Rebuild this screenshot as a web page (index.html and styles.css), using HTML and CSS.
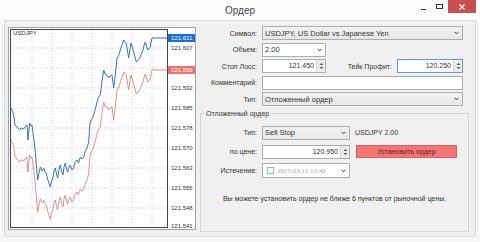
FILE: index.html
```html
<!DOCTYPE html>
<html lang="ru">
<head>
<meta charset="UTF-8">
<title>Ордер</title>
<link rel="stylesheet" href="styles.css">
</head>
<body>
<div class="window">
  <div class="titlebar">
    <span class="title">Ордер</span>
    <div class="controls">
      <span class="ctl min"></span>
      <span class="ctl max"></span>
      <span class="ctl close"><svg width="6" height="6" viewBox="0 0 6 6"><path d="M0.5 0.5L5.5 5.5M5.5 0.5L0.5 5.5" stroke="#fff" stroke-width="1.1"/></svg></span>
    </div>
  </div>

  <div class="body">
    <div class="chart-pane">
      <svg class="chart" width="188" height="203" viewBox="9 28 188 203">
        <defs>
          <polyline id="tick" fill="none" points="12,109 13.5,112 14.7,116 16,126 18,128 20.7,131 22,129 24.7,130 26,128 28,126 29,141 30.7,124 32,127 33,126 34.7,139 36,150 37.3,166 38.7,181 40,174 41.3,168 43,172 44.7,169 46,173 47.3,174 48.5,180 49.7,183 51.3,188 52.5,182 54,178 55,172 56.3,169 57.5,175 58.7,179 60,170 61.3,166 62.5,172 64,176 65,168 66.3,164 67.5,170 68.7,173 70,168 71.3,166 73,171 74.7,169 76,163 78,161 79.5,164 81.3,158 83,160 84.7,158 86,153 88,149 89.7,143 90.5,130 91.3,123 93,120 94.7,116 96,111 97.3,106 98.5,101 99.7,98 101.3,96 103,82 104.7,71 106,75 108,76 109.7,79 111,77 113,76 114.7,89 116.3,76 118,59 119.5,57 121.3,51 123,46 124.7,41 126,43 127.3,44 128.5,52 129.7,59 131,50 132,44 133.3,48 134.7,53 136,58 137.3,63 139,61 140.7,59 142.3,55 144,51 145.2,46 146.3,43 147.5,47 148.7,51 150,50 151.3,48 152,43 153,39 169,39"/>
        </defs>
        <rect x="9.5" y="28.5" width="187" height="202" fill="#fff" stroke="#a3a3a3"/>
        <path d="M33 31V228M53 31V228M73 31V228M93 31V228M113 31V228M133 31V228M153 31V228M12 49H168M12 69H168M12 89H168M12 109H168M12 129H168M12 149H168M12 169H168M12 189H168M12 209H168" stroke="#cfcfcf" stroke-dasharray="1 2"/>
        <use href="#tick" stroke="#dc9292" transform="translate(0 32)"/>
        <use href="#tick" stroke="#3574bb"/>
        <rect x="11.5" y="30.5" width="157" height="198" fill="none" stroke="#444"/>
        <text class="sym" x="14" y="36">USDJPY</text>
        <g class="scale">
          <text x="172" y="51">121.607</text>
          <text x="172" y="91">121.592</text>
          <text x="172" y="111">121.585</text>
          <text x="172" y="131">121.578</text>
          <text x="172" y="151">121.570</text>
          <text x="172" y="171">121.563</text>
          <text x="172" y="191">121.556</text>
          <text x="172" y="211">121.548</text>
          <text x="172" y="229">121.541</text>
        </g>
        <rect x="169" y="35" width="27" height="8" fill="#1c6fd6"/>
        <text class="tag" x="172" y="41">121.611</text>
        <rect x="169" y="67" width="27" height="8" fill="#ec7272"/>
        <text class="tag" x="172" y="73">121.599</text>
      </svg>
    </div>

    <div class="form-pane">
      <div class="form">
        <label>Символ:</label>
        <div class="sel">USDJPY, US Dollar vs Japanese Yen<svg class="chev" width="5" height="4" viewBox="0 0 5 4"><path d="M0.5 0.8L2.5 2.8L4.5 0.8" fill="none" stroke="#333" stroke-width="1"/></svg></div>

        <label>Объем:</label>
        <div class="row"><div class="sel white w64">2.00<svg class="chev" width="5" height="4" viewBox="0 0 5 4"><path d="M0.5 0.8L2.5 2.8L4.5 0.8" fill="none" stroke="#333" stroke-width="1"/></svg></div></div>

        <label>Стоп Лосс:</label>
        <div class="row">
          <div class="num w64"><span class="val">121.450</span><span class="spin"><svg width="5" height="8" viewBox="0 0 5 8"><path d="M2.5 1L4.5 3H0.5ZM2.5 7L4.5 5H0.5Z" fill="#555"/></svg></span></div>
          <label class="tp">Тейк Профит:</label>
          <div class="num focus w66"><span class="val">120.250</span><span class="spin"><svg width="5" height="8" viewBox="0 0 5 8"><path d="M2.5 1L4.5 3H0.5ZM2.5 7L4.5 5H0.5Z" fill="#555"/></svg></span></div>
        </div>

        <label>Комментарий:</label>
        <div class="edit"></div>

        <label>Тип:</label>
        <div class="sel">Отложенный ордер<svg class="chev" width="5" height="4" viewBox="0 0 5 4"><path d="M0.5 0.8L2.5 2.8L4.5 0.8" fill="none" stroke="#333" stroke-width="1"/></svg></div>
      </div>

      <fieldset class="group">
        <legend>Отложенный ордер</legend>
        <div class="form inner">
          <label>Тип:</label>
          <div class="row">
            <div class="sel w88">Sell Stop<svg class="chev" width="5" height="4" viewBox="0 0 5 4"><path d="M0.5 0.8L2.5 2.8L4.5 0.8" fill="none" stroke="#333" stroke-width="1"/></svg></div>
            <span class="info">USDJPY 2.00</span>
          </div>

          <label>по цене:</label>
          <div class="row">
            <div class="num w88"><span class="val">120.950</span><span class="spin"><svg width="5" height="8" viewBox="0 0 5 8"><path d="M2.5 1L4.5 3H0.5ZM2.5 7L4.5 5H0.5Z" fill="#555"/></svg></span></div>
            <button class="place">Установить ордер</button>
          </div>

          <label>Истечение:</label>
          <div class="row">
            <div class="sel white date w88"><span class="check"></span><span class="dt">2015.03.11 13:40</span><svg class="chev" width="5" height="4" viewBox="0 0 5 4"><path d="M0.5 0.8L2.5 2.8L4.5 0.8" fill="none" stroke="#333" stroke-width="1"/></svg></div>
          </div>
        </div>
        <p class="hint">Вы можете установить ордер не ближе 6 пунктов от рыночной цены.</p>
      </fieldset>
    </div>
  </div>
</div>
</body>
</html>
```

FILE: styles.css
```css
*{box-sizing:border-box}
body{margin:0;background:#f7f7f7}
.window{
  width:480px;height:242px;display:flex;flex-direction:column;background:#f8f8f8;
  font-family:"Liberation Sans",Arial,sans-serif;font-size:7px;color:#333
}
.titlebar{height:20px;display:grid;grid-template-columns:1fr auto 1fr;align-items:center;background:#fcfcfc}
.title{grid-column:2;font-size:10px;color:#444}
.controls{justify-self:end;align-self:start;display:flex;align-items:flex-start;margin-right:4px}
.ctl{display:block}
.min{width:5px;height:1px;background:#333;margin-top:9px;margin-right:10px}
.max{width:7px;height:5px;border:1px solid #333;margin-top:4px;margin-right:5px}
.close{width:28px;height:13px;background:#c7504f;display:flex;align-items:center;justify-content:center}

.body{flex:1;margin:0 4px 5px;background:#f0f0f0;border:1px solid #dcdcdc;display:flex}
.chart-pane{padding:6px 0 0 3px}
.chart{display:block}
.chart text{font-family:"Liberation Sans",Arial,sans-serif;font-size:6px;fill:#333}
.chart .tag{fill:#fff}

.form-pane{flex:1;padding-top:5px}
.form{display:grid;grid-template-columns:61px 201px;grid-auto-rows:14px;column-gap:5px;row-gap:2.5px;align-items:center}
.form label{text-align:right;white-space:nowrap}
.row{display:flex;align-items:center;height:14px}

.sel{
  height:14px;display:flex;align-items:center;justify-content:space-between;font-size:7.5px;
  padding:0 3px 0 2px;border:1px solid #adadad;background:linear-gradient(#f2f2f2,#e6e6e6);white-space:nowrap
}
.sel.white{background:#fff;border-color:#abadb3}
.chev{flex:none}
.w64{width:64px}
.w66{width:66px}
.w88{width:88px}

.num{height:14px;display:flex;border:1px solid #abadb3;background:#fff}
.num.focus{border-color:#5a9ee0}
.val{flex:1;text-align:right;padding-right:2px;line-height:12px}
.spin{width:9px;display:flex;align-items:center;justify-content:center;background:#ececec;border-left:1px solid #d4d4d4}
.tp{flex:1;padding-right:5px}
.edit{height:14px;border:1px solid #abadb3;background:#fff}

.group{margin:3.5px 0 0 4px;width:268px;height:122px;padding:0;border:1px solid #d5d5d5}
.group legend{padding:0 2px;margin-left:3px;line-height:8px}
.form.inner{grid-template-columns:56px 206px;row-gap:5px;margin-top:8px}
.inner .row:last-child{height:15px}
.inner .date{height:15px;justify-content:flex-start}
.info{margin-left:5px}
.place{
  width:101px;height:13px;margin-left:6px;padding:0;border:1px solid #d96060;background:#f37575;
  font-family:inherit;font-size:7px;color:#6a1717
}
.check{width:7px;height:7px;border:1px solid #8db3d9;background:#fff;margin:0 3px 0 2px;flex:none}
.dt{white-space:nowrap;font-family:"Liberation Serif","Times New Roman",serif;font-size:7px;color:#a3a3a3}
.date .chev{margin-left:auto}
.hint{margin:17px 0 0;text-align:center}
```
